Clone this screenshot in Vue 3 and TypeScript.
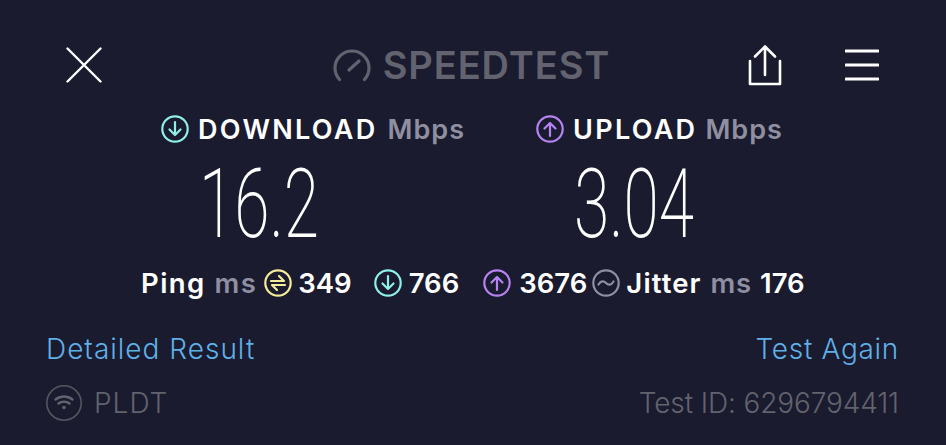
<template>
  <div class="result-screen">
    <header class="top-bar">
      <svg class="icon-close" viewBox="0 0 36 36" width="36" height="36">
        <path d="M1.5 1.5 34.5 34.5M34.5 1.5 1.5 34.5" />
      </svg>
      <div class="logo">
        <svg viewBox="0 0 38 32" width="38" height="32">
          <path class="gauge" d="M6.5 30.5A17 17 0 1 1 31.5 30.5" />
          <path class="gauge" d="M16 21 26 12" />
        </svg>
        <span class="logo-text">SPEEDTEST</span>
      </div>
      <div class="top-actions">
        <svg class="icon-share" viewBox="0 0 34 42" width="34" height="42">
          <path d="M2 17V40H32V17M17 31V3M7 12.5 17 2.5 27 12.5" />
        </svg>
        <svg class="icon-menu" viewBox="0 0 34 32" width="34" height="32">
          <path d="M1 2H33M1 16H33M1 30H33" />
        </svg>
      </div>
    </header>

    <section class="speeds">
      <div v-for="s in speeds" :key="s.label" class="speed" :class="s.kind">
        <div class="speed-label">
          <svg class="circle-icon" :class="s.kind" viewBox="0 0 28 28" width="28" height="28">
            <circle cx="14" cy="14" r="12.7" />
            <path :d="s.kind === 'down' ? arrowDown : arrowUp" />
          </svg>
          <span class="label-name">{{ s.label }}</span>
          <span class="unit">Mbps</span>
        </div>
        <div class="speed-value"><span>{{ s.value }}</span></div>
      </div>
    </section>

    <section class="stats">
      <span class="word">Ping</span>
      <span class="word unit ping-unit">ms</span>
      <svg class="circle-icon ping" viewBox="0 0 28 28" width="28" height="28">
        <circle cx="14" cy="14" r="12.7" />
        <path d="M7 12H20L15 7M21 16H8L13 21" />
      </svg>
      <span class="num-349">349</span>
      <svg class="circle-icon down" viewBox="0 0 28 28" width="28" height="28">
        <circle cx="14" cy="14" r="12.7" />
        <path :d="arrowDown" />
      </svg>
      <span class="num-766">766</span>
      <svg class="circle-icon up" viewBox="0 0 28 28" width="28" height="28">
        <circle cx="14" cy="14" r="12.7" />
        <path :d="arrowUp" />
      </svg>
      <span class="num-3676">3676</span>
      <svg class="circle-icon jitter" viewBox="0 0 28 28" width="28" height="28">
        <circle cx="14" cy="14" r="12.7" />
        <path d="M6.5 15.5C9 11.5 11.5 11.5 14 14S19 16.5 21.5 12.5" />
      </svg>
      <span class="word jitter-word">Jitter</span>
      <span class="word unit jitter-unit">ms</span>
      <span>176</span>
    </section>

    <section class="links">
      <span class="detail-link">Detailed Result</span>
      <span class="again-link">Test Again</span>
    </section>

    <footer class="bottom">
      <div class="isp">
        <svg class="wifi" viewBox="0 0 36 36" width="36" height="36">
          <circle class="ring" cx="18" cy="18" r="17.2" />
          <path d="M9.5 14.5C14.5 10.5 21.5 10.5 26.5 14.5M12.5 18.5C15.5 16 20.5 16 23.5 18.5" />
          <circle class="dot" cx="18" cy="22.5" r="1.8" />
        </svg>
        <span class="isp-name">PLDT</span>
      </div>
      <span class="test-id">Test ID: 6296794411</span>
    </footer>
  </div>
</template>

<script setup lang="ts">
interface Speed {
  label: string
  value: string
  kind: 'down' | 'up'
}

const arrowDown = 'M14 7V20M8.5 14.5 14 20 19.5 14.5'
const arrowUp = 'M14 21V8M8.5 13.5 14 8 19.5 13.5'

const speeds: Speed[] = [
  { label: 'DOWNLOAD', value: '16.2', kind: 'down' },
  { label: 'UPLOAD', value: '3.04', kind: 'up' }
]
</script>

<style>
html,
body {
  background: #1a1b2e;
}
</style>

<style scoped>
.result-screen {
  width: 946px;
  height: 445px;
  box-sizing: border-box;
  overflow: hidden;
  padding: 45px 47px 0 46px;
  background: #1a1b2e;
  font-family: Inter, "Open Sans", sans-serif;
  color: #fff;
}

svg {
  display: block;
  flex: none;
  fill: none;
  stroke-linecap: round;
  stroke-linejoin: round;
}

.top-bar {
  display: flex;
  align-items: center;
  justify-content: space-between;
  height: 40px;
  padding: 0 20px;
}

.icon-close path {
  stroke: #fff;
  stroke-width: 2.4;
}

.logo {
  display: flex;
  align-items: center;
  gap: 12px;
  margin-left: 93px;
}

.logo svg path {
  stroke: #62636f;
  stroke-width: 3.2;
}

.logo-text {
  font-size: 38px;
  font-weight: 600;
  letter-spacing: 0.9px;
  color: #62636f;
}

.top-actions {
  display: flex;
  align-items: center;
  gap: 63px;
}

.icon-share path,
.icon-menu path {
  stroke: #fff;
  stroke-width: 2.6;
}

.icon-menu path {
  stroke-width: 3;
}

.speeds {
  display: grid;
  grid-template-columns: 375px 1fr;
  margin-top: 30px;
  padding-left: 115px;
}

.speed-label {
  display: flex;
  align-items: center;
  height: 28px;
  font-size: 27px;
  font-weight: 600;
}

.label-name {
  margin-left: 9px;
  letter-spacing: 2.3px;
}

.speed-label .unit {
  margin-left: 10px;
  letter-spacing: 1px;
}

.speed.up .speed-label .unit {
  margin-left: 8px;
}

.unit {
  color: #8f8fa1;
}

.circle-icon circle,
.circle-icon path {
  stroke-width: 2.2;
}

.circle-icon.down circle,
.circle-icon.down path {
  stroke: #8ff0ea;
}

.circle-icon.up circle,
.circle-icon.up path {
  stroke: #b583f2;
}

.circle-icon.ping circle,
.circle-icon.ping path {
  stroke: #f5eb9a;
}

.circle-icon.jitter circle,
.circle-icon.jitter path {
  stroke: #8f8fa1;
}

.speed-value {
  width: 196px;
  margin-top: 13px;
  text-align: center;
  font-family: Roboto, sans-serif;
  font-size: 97px;
  font-weight: 200;
  line-height: 97px;
}

.speed-value span {
  display: inline-block;
  transform: scaleX(0.66);
}

.stats {
  display: flex;
  align-items: center;
  height: 34px;
  margin-top: 13px;
  padding-left: 95px;
  font-size: 27.5px;
  font-weight: 600;
}

.word {
  letter-spacing: 1.4px;
}

.ping-unit {
  margin: 0 7px 0 9px;
}

.jitter-unit {
  margin: 0 8px 0 9px;
  letter-spacing: 0.8px;
}

.num-349 {
  margin: 0 22px 0 6px;
}

.num-766 {
  margin: 0 24px 0 7px;
}

.num-3676 {
  margin: 0 5px 0 8px;
}

.jitter-word {
  margin-left: 6px;
  letter-spacing: 1.1px;
}

.links {
  display: flex;
  justify-content: space-between;
  margin-top: 32px;
  font-size: 28px;
  font-weight: 300;
  line-height: 34px;
  color: #5fb0e8;
}

.detail-link {
  letter-spacing: 1px;
}

.again-link {
  letter-spacing: 0.7px;
}

.bottom {
  display: flex;
  align-items: center;
  justify-content: space-between;
  margin-top: 19px;
  font-size: 28px;
  font-weight: 300;
  line-height: 36px;
  color: #62636f;
}

.isp {
  display: flex;
  align-items: center;
  gap: 12px;
}

.isp-name {
  letter-spacing: 1px;
}

.test-id {
  letter-spacing: -0.12px;
}

.wifi .ring {
  stroke: #55565f;
  stroke-width: 1.6;
}

.wifi path {
  stroke: #62636f;
  stroke-width: 2.4;
}

.wifi .dot {
  fill: #62636f;
}
</style>
